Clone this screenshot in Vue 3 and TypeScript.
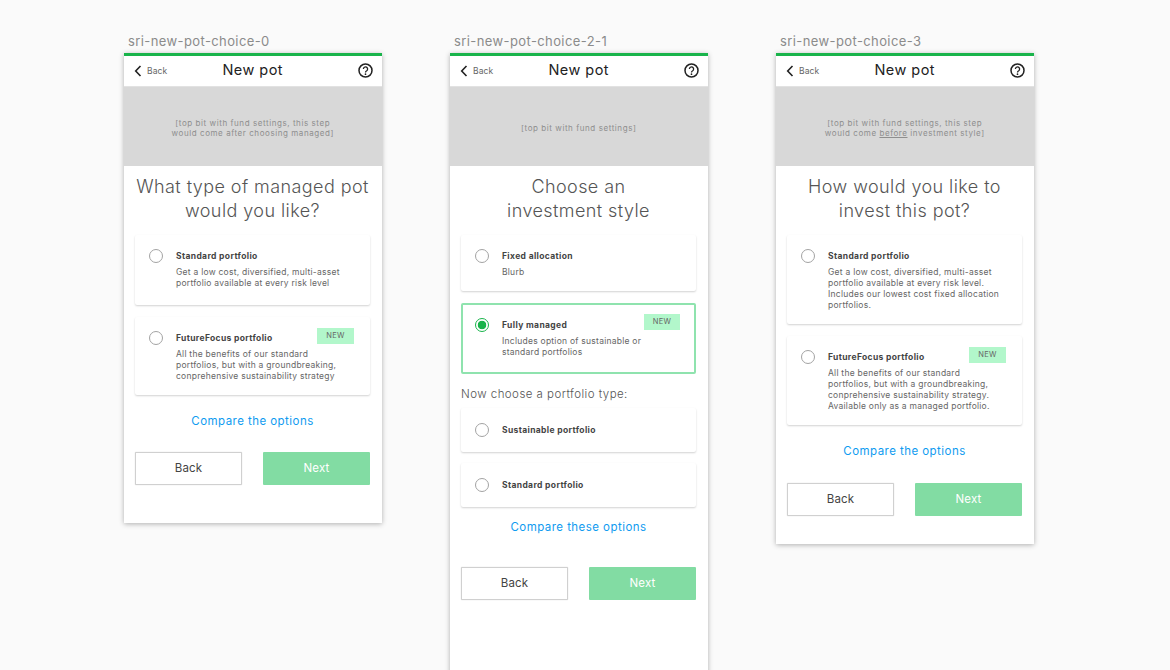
<script setup lang="ts">
interface Option {
  title: string
  lines: string[]
  isNew?: boolean
  selected?: boolean
  height: number
}

interface Screen {
  label: string
  note: string[]
  heading: string[]
  options: Option[]
  subhead?: string
  subOptions?: Option[]
  link: string
  linkTop: number
  buttonsTop: number
  height: number
}

const screens: Screen[] = [
  {
    label: 'sri-new-pot-choice-0',
    note: ['[top bit with fund settings, this step', 'would come after choosing managed]'],
    heading: ['What type of managed pot', 'would you like?'],
    options: [
      {
        title: 'Standard portfolio',
        lines: ['Get a low cost, diversified, multi-asset', 'portfolio available at every risk level'],
        height: 70,
      },
      {
        title: 'FutureFocus portfolio',
        lines: [
          'All the benefits of our standard',
          'portfolios, but with a groundbreaking,',
          'conprehensive sustainability strategy',
        ],
        isNew: true,
        height: 78,
      },
    ],
    link: 'Compare the options',
    linkTop: 18,
    buttonsTop: 23,
    height: 470,
  },
  {
    label: 'sri-new-pot-choice-2-1',
    note: ['[top bit with fund settings]'],
    heading: ['Choose an', 'investment style'],
    options: [
      { title: 'Fixed allocation', lines: ['Blurb'], height: 56 },
      {
        title: 'Fully managed',
        lines: ['Includes option of sustainable or', 'standard portfolios'],
        isNew: true,
        selected: true,
        height: 71,
      },
    ],
    subhead: 'Now choose a portfolio type:',
    subOptions: [
      { title: 'Sustainable portfolio', lines: [], height: 44 },
      { title: 'Standard portfolio', lines: [], height: 44 },
    ],
    link: 'Compare these options',
    linkTop: 12,
    buttonsTop: 32,
    height: 640,
  },
  {
    label: 'sri-new-pot-choice-3',
    note: ['[top bit with fund settings, this step', 'would come before investment style]'],
    heading: ['How would you like to', 'invest this pot?'],
    options: [
      {
        title: 'Standard portfolio',
        lines: [
          'Get a low cost, diversified, multi-asset',
          'portfolio available at every risk level.',
          'Includes our lowest cost fixed allocation',
          'portfolios.',
        ],
        height: 89,
      },
      {
        title: 'FutureFocus portfolio',
        lines: [
          'All the benefits of our standard',
          'portfolios, but with a groundbreaking,',
          'conprehensive sustainability strategy.',
          'Available only as a managed portfolio.',
        ],
        isNew: true,
        height: 89,
      },
    ],
    link: 'Compare the options',
    linkTop: 18,
    buttonsTop: 24,
    height: 491,
  },
]

function noteParts(line: string): string[] {
  return line.split('before')
}
</script>

<template>
  <div class="board">
    <section v-for="screen in screens" :key="screen.label" class="column">
      <div class="label">{{ screen.label }}</div>
      <div class="phone" :style="{ height: screen.height + 'px' }">
        <header class="topbar">
          <span class="back">
            <svg width="8" height="12" viewBox="0 0 8 12" aria-hidden="true">
              <path d="M6.5 1 1.7 6l4.8 5" fill="none" stroke="#222" stroke-width="1.6" />
            </svg>
            Back
          </span>
          <span class="topbar__title">New pot</span>
          <svg class="help" width="15" height="15" viewBox="0 0 15 15" aria-hidden="true">
            <circle cx="7.5" cy="7.5" r="6.5" fill="none" stroke="#222" stroke-width="1.5" />
            <path d="M5.4 6a2.1 2.1 0 1 1 3.3 1.7c-.8.5-1.2.9-1.2 1.8" fill="none" stroke="#222" stroke-width="1.3" />
            <circle cx="7.5" cy="11.2" r=".85" fill="#222" />
          </svg>
        </header>

        <div class="settings">
          <p v-for="line in screen.note" :key="line">
            <template v-if="line.includes('before')">
              {{ noteParts(line)[0] }}<u>before</u>{{ noteParts(line)[1] }}
            </template>
            <template v-else>{{ line }}</template>
          </p>
        </div>

        <div class="content">
          <h2 class="heading">
            <span v-for="line in screen.heading" :key="line">{{ line }}</span>
          </h2>

          <div class="options">
            <article
              v-for="option in screen.options"
              :key="option.title"
              class="card"
              :class="{ 'card--selected': option.selected }"
              :style="{ height: option.height + 'px' }"
            >
              <span class="radio" :class="{ 'radio--on': option.selected }"></span>
              <div class="card__body">
                <h3>{{ option.title }}</h3>
                <p v-for="line in option.lines" :key="line">{{ line }}</p>
              </div>
              <span v-if="option.isNew" class="tag">NEW</span>
            </article>
          </div>

          <template v-if="screen.subOptions">
            <div class="subhead">{{ screen.subhead }}</div>
            <div class="options options--sub">
              <article
                v-for="option in screen.subOptions"
                :key="option.title"
                class="card card--plain"
                :style="{ height: option.height + 'px' }"
              >
                <span class="radio"></span>
                <div class="card__body">
                  <h3>{{ option.title }}</h3>
                </div>
              </article>
            </div>
          </template>

          <a class="compare" :style="{ marginTop: screen.linkTop + 'px' }">{{ screen.link }}</a>

          <div class="actions" :style="{ marginTop: screen.buttonsTop + 'px' }">
            <button type="button" class="btn btn--back">Back</button>
            <button type="button" class="btn btn--next">Next</button>
          </div>
        </div>
      </div>
    </section>
  </div>
</template>

<style>
html,
body {
  margin: 0;
  background: #fafafa;
  overflow: hidden;
}
</style>

<style scoped>
.board {
  display: flex;
  gap: 68.5px;
  height: 670px;
  padding: 33px 0 0 124px;
  box-sizing: border-box;
  overflow: hidden;
  background: #fafafa;
  font-family: Inter, "Open Sans", sans-serif;
}

.column {
  width: 257.5px;
  flex: none;
}

.label {
  height: 20px;
  padding-left: 4px;
  font-size: 13px;
  line-height: 16px;
  letter-spacing: 0.4px;
  color: #8b8b8b;
}

.phone {
  box-sizing: border-box;
  background: #fff;
  border-top: 3px solid #19b44b;
  box-shadow: 0 1px 5px rgba(0, 0, 0, 0.3);
}

.topbar {
  position: relative;
  display: flex;
  align-items: center;
  justify-content: center;
  height: 31px;
  padding-bottom: 4px;
  box-sizing: border-box;
  border-bottom: 1px solid #e2e2e2;
}

.topbar__title {
  font-size: 14.5px;
  color: #222;
  letter-spacing: 0.45px;
}

.back {
  position: absolute;
  left: 10px;
  top: 9px;
  display: flex;
  align-items: center;
  gap: 5px;
  font-size: 8.5px;
  letter-spacing: 0.1px;
  color: #666;
}

.help {
  position: absolute;
  right: 9px;
  top: 7px;
}

.settings {
  display: flex;
  flex-direction: column;
  align-items: center;
  justify-content: center;
  box-sizing: border-box;
  height: 79px;
  padding-top: 3px;
  background: #d8d8d8;
  font-size: 8px;
  line-height: 10px;
  letter-spacing: 0.57px;
  color: #8e8e8e;
}

.settings p {
  margin: 0;
}

.content {
  display: flex;
  flex-direction: column;
  align-items: center;
  padding: 9px 11.5px 0 11px;
}

.heading {
  display: flex;
  flex-direction: column;
  align-items: center;
  margin: 0 0 12px;
  font-size: 18px;
  font-weight: 300;
  line-height: 24px;
  letter-spacing: 0.42px;
  color: #555;
  white-space: nowrap;
}

.options {
  display: flex;
  flex-direction: column;
  gap: 12px;
  width: 100%;
}

.options--sub {
  gap: 11px;
}

.card {
  position: relative;
  display: flex;
  box-sizing: border-box;
  padding: 15px 10px 0 14px;
  background: #fff;
  border-radius: 2px;
  box-shadow: 0 1px 2px rgba(0, 0, 0, 0.18);
}

.card--selected {
  padding: 14px 8px 0 12px;
  border: 2px solid #8fe3ae;
  box-shadow: none;
}

.card--plain {
  align-items: center;
  padding-top: 0;
}

.radio {
  flex: none;
  box-sizing: border-box;
  width: 14px;
  height: 14px;
  margin-top: -1px;
  border: 1.5px solid #a3a3a3;
  border-radius: 50%;
  background: #fff;
}

.radio--on {
  border: 1.5px solid #19b44b;
  background: radial-gradient(circle, #19b44b 0 4px, #fff 4.6px);
}

.card__body {
  margin-left: 13px;
  white-space: nowrap;
}

.card__body h3 {
  margin: 0 0 4.5px;
  font-size: 8.5px;
  font-weight: 700;
  line-height: 12px;
  letter-spacing: 0.36px;
  color: #444;
}

.card--plain .card__body h3 {
  margin: 0;
}

.card__body p {
  margin: 0;
  font-size: 8.5px;
  line-height: 11.2px;
  letter-spacing: 0.25px;
  color: #666;
}

.tag {
  position: absolute;
  top: 11px;
  right: 16px;
  width: 37px;
  height: 16px;
  background: #b2f7cb;
  font-size: 7.5px;
  line-height: 16px;
  letter-spacing: 0.3px;
  text-align: center;
  color: #666;
}

.card--selected .tag {
  top: 9px;
  right: 14px;
  width: 36px;
}

.subhead {
  align-self: flex-start;
  margin: 13px 0 6px;
  font-size: 11.5px;
  font-weight: 300;
  line-height: 15px;
  letter-spacing: 0.45px;
  color: #555;
}

.compare {
  font-size: 11.5px;
  line-height: 16px;
  letter-spacing: 0.45px;
  color: #0f9bf0;
}

.actions {
  display: flex;
  justify-content: space-between;
  width: 100%;
}

.btn {
  width: 107px;
  height: 33px;
  box-sizing: border-box;
  font-family: inherit;
  font-size: 11.5px;
  letter-spacing: 0.2px;
  border-radius: 1px;
  padding: 0 0 1px;
}

.btn--back {
  background: #fff;
  border: 1px solid #d0d0d0;
  box-shadow: 0 0 1px rgba(0, 0, 0, 0.25);
  color: #444;
}

.btn--next {
  background: #82dca3;
  border: 0;
  color: #fff;
}
</style>
